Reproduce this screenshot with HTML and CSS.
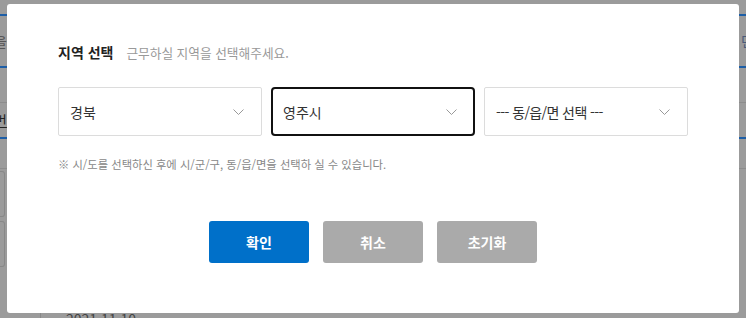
FILE: index.html
```html
<!DOCTYPE html>
<html lang="ko">
<head>
    <meta charset="UTF-8">
    <title>지역 선택</title>
    <link rel="stylesheet" href="styles.css">
</head>
<body>
    <div class="page">
        <div class="line blue first"></div>
        <div class="row tall"><span class="edge-text">을</span><span class="edge-text right">민</span></div>
        <div class="line blue"></div>
        <div class="row mid"></div>
        <div class="line grey"></div>
        <div class="row mid"><span class="edge-text under">번</span></div>
        <div class="line blue"></div>
        <div class="row short"></div>
        <div class="line grey"></div>
        <div class="row boxes"><span class="box"></span></div>
        <div class="row boxes"><span class="box"></span></div>
        <div class="row last"><span class="date">2021.11.10</span></div>
    </div>

    <div class="modal">
        <div class="modal-title">
            <strong>지역 선택</strong>
            <span class="sub">근무하실 지역을 선택해주세요.</span>
        </div>
        <div class="selects">
            <div class="select">
                <span>경북</span>
                <svg width="11" height="6" viewBox="0 0 11 6"><path d="M0.5 0.5 L5.5 5.5 L10.5 0.5" fill="none" stroke="#999" stroke-width="1"/></svg>
            </div>
            <div class="select focus">
                <span>영주시</span>
                <svg width="11" height="6" viewBox="0 0 11 6"><path d="M0.5 0.5 L5.5 5.5 L10.5 0.5" fill="none" stroke="#999" stroke-width="1"/></svg>
            </div>
            <div class="select">
                <span class="placeholder">--- 동/읍/면 선택 ---</span>
                <svg width="11" height="6" viewBox="0 0 11 6"><path d="M0.5 0.5 L5.5 5.5 L10.5 0.5" fill="none" stroke="#999" stroke-width="1"/></svg>
            </div>
        </div>
        <p class="note">※ 시/도를 선택하신 후에 시/군/구, 동/읍/면을 선택하 실 수 있습니다.</p>
        <div class="buttons">
            <button class="btn primary">확인</button>
            <button class="btn">취소</button>
            <button class="btn">초기화</button>
        </div>
    </div>
</body>
</html>
```

FILE: styles.css
```css
body {
    margin: 0;
    padding: 0;
    width: 746px;
    height: 318px;
    overflow: hidden;
    background-color: #9b9b9b;
    font-family: "Noto Sans CJK KR", "Noto Sans", sans-serif;
    position: relative;
}
.page {
    display: flex;
    flex-direction: column;
    height: 318px;
    overflow: hidden;
}
.line {
    height: 2px;
    flex-shrink: 0;
}
.line.first {
    margin-top: 14px;
}
.line.blue {
    background-color: #1d5ea6;
}
.line.grey {
    height: 1px;
    background-color: #8c8c8c;
}
.row {
    display: flex;
    justify-content: space-between;
    align-items: center;
    flex-shrink: 0;
}
.row.tall { height: 50px; }
.row.mid { height: 34px; }
.row.short { height: 29px; }
.row.boxes { height: 50px; }
.row.last {
    flex: 1;
    align-items: flex-start;
    padding-top: 40px;
    overflow: hidden;
    border-left: 1px solid #888;
    margin-left: 40px;
}
.edge-text {
    font-size: 14px;
    color: #555;
    margin-left: -6px;
}
.edge-text.right {
    margin-left: 0;
    margin-right: -8px;
    color: #4a5a7a;
}
.edge-text.under {
    color: #222;
    text-decoration: underline;
}
.box {
    width: 4px;
    height: 44px;
    border: 1px solid #888;
    border-left: 0;
    border-radius: 0 3px 3px 0;
}
.date {
    font-size: 14px;
    line-height: 20px;
    color: #444;
    margin-left: 25px;
}
.modal {
    position: absolute;
    left: 7px;
    top: 4px;
    width: 732px;
    height: 309px;
    box-sizing: border-box;
    padding: 38px 51px 0;
    background-color: #fff;
    border-radius: 3px;
}
.modal-title {
    line-height: 20px;
    font-size: 14px;
    color: #222;
}
.modal-title strong {
    font-weight: bold;
}
.modal-title .sub {
    margin-left: 9px;
    font-size: 12.7px;
    color: #999;
}
.selects {
    margin-top: 24px;
    display: flex;
    gap: 9px;
}
.select {
    width: 204px;
    height: 49px;
    box-sizing: border-box;
    border: 1px solid #dcdcdc;
    border-radius: 2px;
    padding: 0 17px 0 11px;
    display: flex;
    align-items: center;
    justify-content: space-between;
    font-size: 14px;
    color: #333;
}
.select .placeholder {
    letter-spacing: -0.6px;
}
.select.focus {
    border: 2px solid #111;
    border-radius: 4px;
    padding: 0 16px 0 10px;
}
.note {
    margin: 20px 0 0;
    line-height: 16px;
    font-size: 11.3px;
    color: #888;
}
.buttons {
    margin-top: 49px;
    display: flex;
    justify-content: center;
    gap: 14px;
}
.btn {
    width: 100px;
    height: 42px;
    border: 0;
    border-radius: 3px;
    background-color: #aaaaaa;
    color: #fff;
    font-family: inherit;
    font-size: 14px;
    font-weight: bold;
}
.btn.primary {
    background-color: #0070c9;
}
```
